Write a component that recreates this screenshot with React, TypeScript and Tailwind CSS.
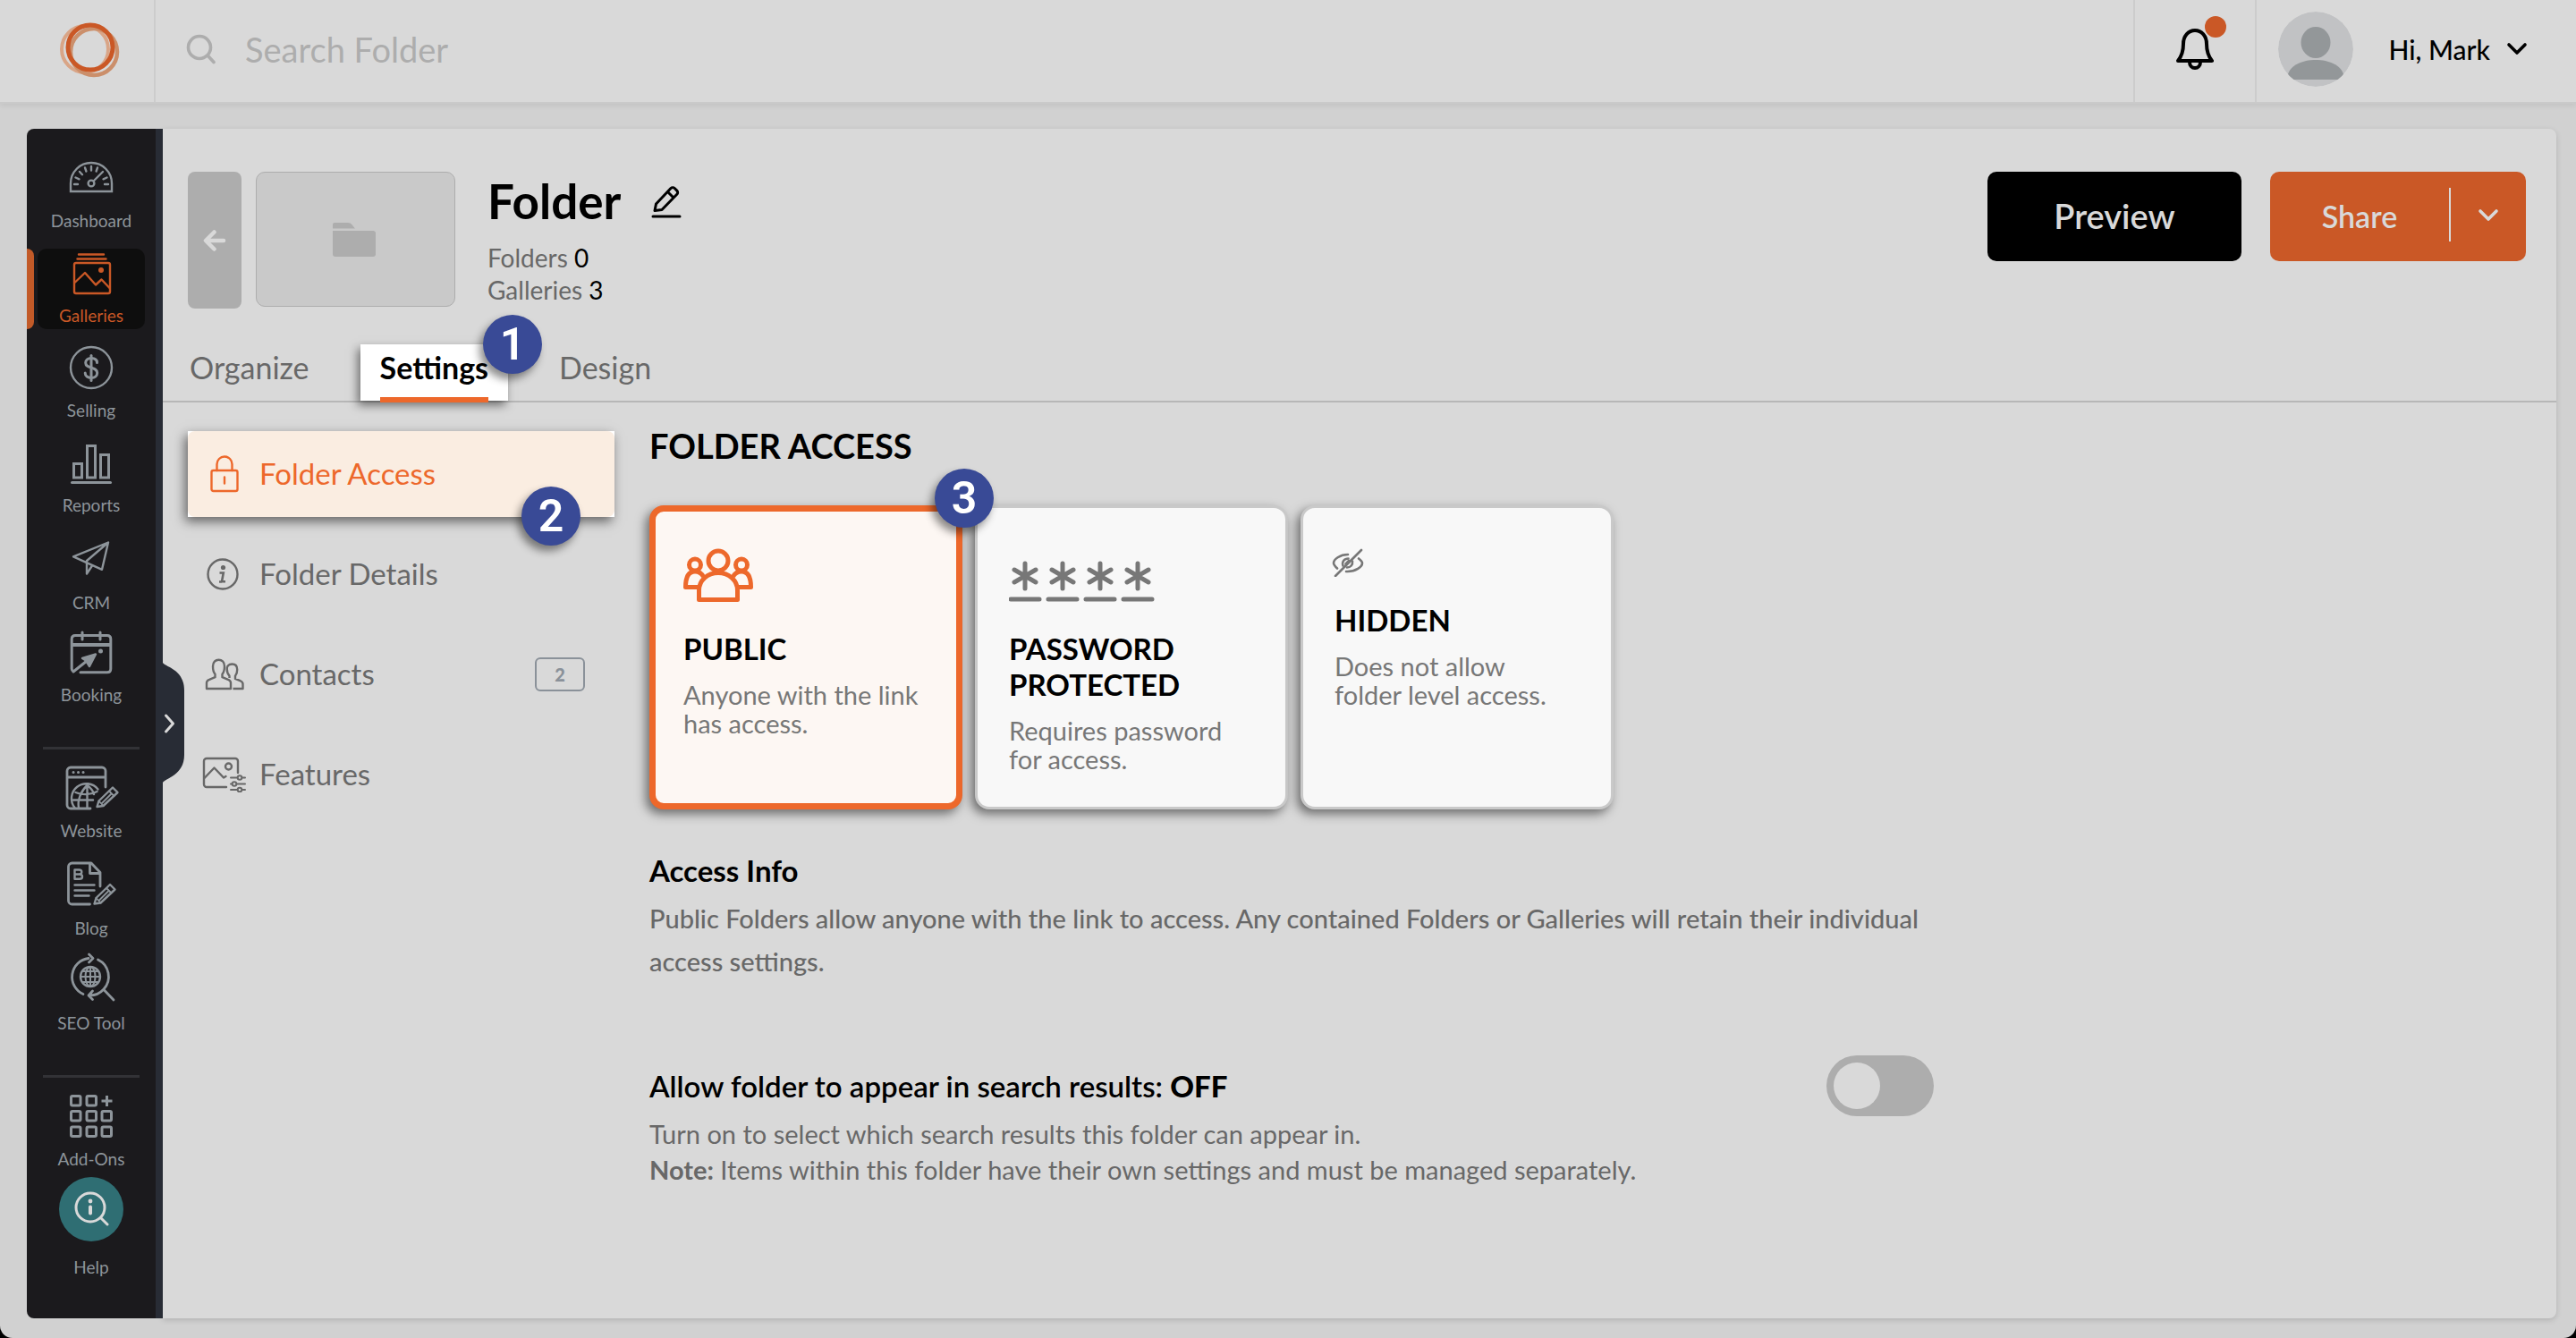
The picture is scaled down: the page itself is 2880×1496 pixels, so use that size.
import React, { useState } from 'react';

interface IconProps {
  className?: string;
}

interface SideItem {
  label: string;
  size: string;
  icon: React.ReactNode;
}

const SideSvg: React.FC<{ children: React.ReactNode }> = ({ children }) => (
  <svg
    viewBox="0 0 72 60"
    className="h-[60px] w-[72px] shrink-0 overflow-visible"
    fill="none"
    stroke="currentColor"
    strokeWidth="2.4"
    strokeLinecap="round"
    strokeLinejoin="round"
    aria-hidden="true"
  >
    {children}
  </svg>
);

const DashboardIcon = () => (
  <SideSvg>
    <path d="M13 39V30a23 23 0 0 1 46 0V39Z" strokeLinejoin="miter" />
    <circle cx="36" cy="30" r="3.4" />
    <path d="M38.5 27.5 49 17" />
    <path d="M17 31h4M51 31h4M18.500 23.500l4 1.800M53.500 23.500l-4 1.800M23 17l3 3.200M29 12.500l1.400 4M36 11v4.500M43 12.500l-1.400 4" />
  </SideSvg>
);

const GalleriesIcon = () => (
  <SideSvg>
    <path d="M22 3.500h28M20.500 8.500h32" />
    <rect x="17" y="13" width="40" height="34" rx="2" />
    <circle cx="47" cy="21" r="3" fill="currentColor" stroke="none" />
    <path d="M18 34.500 29 24l12 13.500 6.500-6L56.500 41" />
  </SideSvg>
);

const SellingIcon = () => (
  <SideSvg>
    <circle cx="36" cy="24" r="23" />
    <path d="M36 10.500v28" strokeWidth="3" />
    <path d="M42.500 18.500c0-3.300-2.800-5-6.500-5s-6.300 2-6.300 5.200c0 7 13 3.800 13 11.300 0 3.400-2.900 5.400-6.700 5.400s-6.800-1.900-6.800-5.300" strokeWidth="3" />
  </SideSvg>
);

const ReportsIcon = () => (
  <SideSvg>
    <g strokeWidth="3" strokeLinejoin="miter">
      <path d="M16.500 25.500h9v15.500h-9ZM31.500 5.500h9V41h-9ZM46.500 15.500h9V41h-9Z" />
      <path d="M14.500 46.500h43" />
    </g>
  </SideSvg>
);

const CrmIcon = () => (
  <SideSvg>
    <path d="M55 4.500 16 20.300l32 14.500L55 4.500ZM55 4.500 31 25v14.500l6-9" />
  </SideSvg>
);

const BookingIcon = () => (
  <SideSvg>
    <path d="M16 45.500c-1.200-.5-1.800-1.500-1.800-2.800V9.500c0-2.400 1.600-4 4-4h35.600c2.400 0 4 1.600 4 4v33.200c0 2.400-1.600 4-4 4H24" strokeWidth="3" />
    <path d="M26 2v8M46 2v8" strokeWidth="3" />
    <path d="M15 16h42" strokeWidth="4" />
    <path d="M16 46 31 34" strokeWidth="3" />
    <path d="M41 26.500 26 31l4 2.500 4 6.500Z" fill="currentColor" />
    <circle cx="46.500" cy="23" r="2.500" fill="currentColor" stroke="none" />
  </SideSvg>
);

const PencilShape = () => (
  <>
    <path d="M0 21.500 2 15 17.500 0 23 5.500 7 20.500Z" />
    <path d="M2 15l5 5.500M13.500 4l5.500 5.500M5.500 17.500 15.500 7.500" strokeWidth="1.800" />
  </>
);

const WebsiteIcon = () => (
  <SideSvg>
    <path d="M35 47H13a4 4 0 0 1-4-4V5a4 4 0 0 1 4-4h35a4 4 0 0 1 4 4v18M9 12h43" strokeWidth="2.800" />
    <path d="M16 6.600h.1M21.500 6.600h.1M27 6.600h.1" strokeWidth="3" />
    <path d="M17.500 46a15.500 15.500 0 0 1 26-20.500M22 46c-1.500-8 2-18 9.500-25M31.500 21v25M31.500 21c4 3 6.500 6 7.500 10M18.500 29c7 3 17 3 24-1M16 37.500h22" />
    <g transform="translate(42.500 23.500)"><PencilShape /></g>
  </SideSvg>
);

const BlogIcon = () => (
  <SideSvg>
    <path d="M34.500 45H14.500a4 4 0 0 1-4-4V3a4 4 0 0 1 4-4H36l10 10.500V25M34.500 0v10.500H45" strokeWidth="2.800" />
    <path d="M17.500 6.500h4.800c4 0 4 5 0 5h-4.800M17.500 11.500h5.200c4.400 0 4.400 5.300 0 5.300h-5.200Z M17.500 6.500v10" />
    <path d="M17.500 23.500h22M17.500 29.500h22M17.500 35.500h16" />
    <g transform="translate(39.500 23)"><PencilShape /></g>
  </SideSvg>
);

const SeoIcon = () => (
  <SideSvg>
    <path d="M27 39.500A21 21 0 0 1 33 -.5M43.500 1A21 21 0 0 1 50 34a21 21 0 0 1-15.500 7M33.500-5l4.500 4.500L33.500 4M37.500 36 33 41l4.500 4.500M50 34.500 61 46" strokeWidth="2.800" />
    <circle cx="35" cy="20" r="11" />
    <path d="M35 9v22M24 20h22M26 14h18M26 26h18" strokeWidth="2" />
    <ellipse cx="35" cy="20" rx="5.500" ry="11" strokeWidth="2" />
  </SideSvg>
);

const AddOnsIcon = () => (
  <SideSvg>
    <g strokeWidth="3">
      <rect x="13.500" y="1.500" width="10.500" height="10.500" rx="1.500" />
      <rect x="31" y="1.500" width="10.500" height="10.500" rx="1.500" />
      <path d="M53.500 1v12M47.500 7h12" strokeLinecap="butt" />
      <rect x="13.500" y="18.500" width="10.500" height="10.500" rx="1.500" />
      <rect x="31" y="18.500" width="10.500" height="10.500" rx="1.500" />
      <rect x="48" y="18.500" width="10.500" height="10.500" rx="1.500" />
      <rect x="13.500" y="36" width="10.500" height="10.500" rx="1.500" />
      <rect x="31" y="36" width="10.500" height="10.500" rx="1.500" />
      <rect x="48" y="36" width="10.500" height="10.500" rx="1.500" />
    </g>
  </SideSvg>
);

const SIDE_GROUPS: SideItem[][] = [
  [
    { label: 'Dashboard', size: 'h-[90px]', icon: <DashboardIcon /> },
    { label: 'Galleries', size: 'h-[90px]', icon: <GalleriesIcon /> },
    { label: 'Selling', size: 'h-[90px]', icon: <SellingIcon /> },
    { label: 'Reports', size: 'h-[90px]', icon: <ReportsIcon /> },
    { label: 'CRM', size: 'h-[93px]', icon: <CrmIcon /> },
    { label: 'Booking', size: 'h-[87px]', icon: <BookingIcon /> },
  ],
  [
    { label: 'Website', size: 'h-[90px]', icon: <WebsiteIcon /> },
    { label: 'Blog', size: 'h-[93px]', icon: <BlogIcon /> },
    { label: 'SEO Tool', size: 'h-[90px]', icon: <SeoIcon /> },
  ],
  [{ label: 'Add-Ons', size: 'h-[90px]', icon: <AddOnsIcon /> }],
];

const Logo = () => (
  <svg viewBox="0 0 72 64" className="h-16 w-[72px]" fill="none" aria-hidden="true">
    <circle cx="31" cy="32" r="26" stroke="#d9a587" strokeWidth="4" />
    <circle cx="41" cy="35" r="26" stroke="#cb8f6b" strokeWidth="4.500" />
    <circle cx="37" cy="30" r="25" stroke="#ca5826" strokeWidth="5" />
  </svg>
);

const SearchIcon = () => (
  <svg viewBox="0 0 34 34" className="h-[34px] w-[34px]" fill="none" stroke="#adadad" strokeWidth="3.600" strokeLinecap="round" aria-hidden="true">
    <circle cx="15" cy="15" r="12.500" />
    <path d="m25 25 6 6.500" />
  </svg>
);

const BellIcon = () => (
  <svg viewBox="0 0 42 46" className="h-[46px] w-[42px]" fill="none" stroke="black" strokeWidth="4" strokeLinejoin="round" strokeLinecap="round" aria-hidden="true">
    <path d="M8 17c0-8.500 5.500-15 13-15s13 6.500 13 15c0 9 2 14 6 19H2c4-5 6-10 6-19Z" />
    <path d="M15 37.500c0 3.600 2.600 6.500 6 6.500s6-2.900 6-6.500" />
  </svg>
);

const Avatar = () => (
  <svg viewBox="0 0 84 84" className="h-[84px] w-[84px] rounded-full" aria-hidden="true">
    <circle cx="42" cy="42" r="42" fill="#c1c2c4" />
    <ellipse cx="42" cy="34.500" rx="16.500" ry="17.500" fill="#939799" />
    <path d="M11 70c3-10 16-16 31-16s28 6 31 16l-5 6H16Z" fill="#939799" />
  </svg>
);

const ChevronDown: React.FC<IconProps> = ({ className }) => (
  <svg viewBox="0 0 24 16" className={`h-4 w-6 ${className ?? ''}`} fill="none" stroke="currentColor" strokeWidth="3.600" strokeLinecap="round" strokeLinejoin="round" aria-hidden="true">
    <path d="m3 3 9 9 9-9" />
  </svg>
);

const LockIcon = () => (
  <svg viewBox="0 0 32 42" className="h-[42px] w-8" fill="none" stroke="currentColor" strokeWidth="2.400" strokeLinecap="round" aria-hidden="true">
    <rect x="1.500" y="17" width="29" height="23" rx="2" />
    <path d="M7.500 17v-7a8.500 8.500 0 0 1 17 0v7M16 24.500v7" />
  </svg>
);

const InfoIcon = () => (
  <svg viewBox="0 0 36 36" className="mr-1 h-9 w-9" fill="none" stroke="currentColor" strokeWidth="2.400" aria-hidden="true">
    <circle cx="18" cy="18" r="16.500" />
    <circle cx="18.500" cy="10.500" r="2.600" fill="currentColor" stroke="none" />
    <path d="M14.500 16.500h4.300L17 26.200h4M14 26.500h3" strokeWidth="2.600" />
  </svg>
);

const ContactsIcon = () => (
  <svg viewBox="0 0 44 36" className="h-9 w-11" fill="none" stroke="currentColor" strokeWidth="2.400" strokeLinejoin="round" aria-hidden="true">
    <path d="M2 34v-6.500c0-2 1-3 3-3.700l6.500-2.600v-3.500C9.500 15.500 9 12.500 9 9c0-4.500 2.800-7.300 6.500-7.300S22 4.500 22 9c0 3.500-.6 6.500-2.500 8.700v3.500l6.500 2.600c2 .7 3 1.700 3 3.700V34Z" />
    <path d="M25 9.500c1.200-2 3-3 5.500-3 3.600 0 5.700 2.500 5.700 6.200 0 3-.7 5.300-2.200 7v3.200l5.500 2.300c2 .8 3 1.700 3 3.600V34H31.500M25 9.500c-.6 4 .3 8 2.500 10.200V22" />
  </svg>
);

const FeaturesIcon = () => (
  <svg viewBox="0 0 50 40" className="h-10 w-[50px]" fill="none" stroke="currentColor" strokeWidth="2.400" strokeLinecap="round" strokeLinejoin="round" aria-hidden="true">
    <path d="M27 34H5a3 3 0 0 1-3-3V5a3 3 0 0 1 3-3h32a3 3 0 0 1 3 3v13" />
    <circle cx="29.500" cy="11" r="3.500" />
    <path d="M2.500 24 13.500 12.500 24 23.500l2.500-1.500" />
    <path d="M32 23.500h7M45 23.500h3M32 30.500h1M39 30.500h9M32 37h7M45 37h3" strokeWidth="2" />
    <circle cx="42" cy="23.500" r="2.300" strokeWidth="2" />
    <circle cx="36" cy="30.500" r="2.300" strokeWidth="2" />
    <circle cx="42" cy="37" r="2.300" strokeWidth="2" />
  </svg>
);

const PublicIcon = () => (
  <svg viewBox="0 0 78 62" className="h-[62px] w-[78px]" fill="none" stroke="#ed682b" strokeWidth="5" strokeLinejoin="round" aria-hidden="true">
    <circle cx="39" cy="14" r="11" />
    <path d="M17.500 57.500V47C17.500 36 27 27.500 39 27.500S60.500 36 60.500 47v10.500Z" />
    <circle cx="13" cy="18.500" r="6.500" />
    <circle cx="65" cy="18.500" r="6.500" />
    <path d="M17 43.500H2.500C2.500 32 6 26 13 26c4.500 0 7.500 2 9.500 6M61 43.500h14.500C75.500 32 72 26 65 26c-4.500 0-7.500 2-9.500 6" />
  </svg>
);

const PasswordIcon = () => (
  <svg viewBox="0 0 164 62" className="h-[62px] w-[164px]" fill="none" stroke="#777777" strokeWidth="5" strokeLinecap="round" aria-hidden="true">
    {[18, 60, 102, 144].map(x => (
      <path key={x} d={`M${x} 17v28M${x - 12} 24l24 14M${x + 12} 24l-24 14M${x - 16} 57h32`} />
    ))}
  </svg>
);

const HiddenIcon = () => (
  <svg viewBox="0 0 36 32" className="-ml-[3px] h-8 w-9" fill="none" stroke="#777777" strokeWidth="2.600" strokeLinecap="round" aria-hidden="true">
    <path d="M33 2 4 31M6 22.500c-2-1.900-4-4.300-4-6C2 12.500 9 7 18 7M30 11.500c2.500 2 4 3.700 4 5C34 20.500 27 26.500 16 26" />
    <path d="M12.500 19.500c-1.500-4.500 1.500-8 6-8M23 14.500c.6 4-2 7-6 7M15.500 17.500l3.500-3.500" />
  </svg>
);

const StepBadge: React.FC<{ step: number; className: string }> = ({ step, className }) => (
  <span
    className={`absolute z-10 flex h-[66px] w-[66px] items-center justify-center rounded-full bg-[#394a96] font-['Roboto'] text-[50px] leading-none font-semibold text-white shadow-[-4px_6px_10px_rgba(0,0,0,0.45)] ${className}`}
  >
    {step}
  </span>
);

const ACCESS_OPTIONS = [
  { id: 'public', title: 'PUBLIC', text: 'Anyone with the link\nhas access.', icon: <PublicIcon />, iconBox: 'h-[90px]' },
  { id: 'password', title: 'PASSWORD PROTECTED', text: 'Requires password\nfor access.', icon: <PasswordIcon />, iconBox: 'h-[90px]' },
  { id: 'hidden', title: 'HIDDEN', text: 'Does not allow\nfolder level access.', icon: <HiddenIcon />, iconBox: 'h-[58px]' },
];

const NAV_ITEMS = [
  { label: 'Folder Access', icon: <LockIcon /> },
  { label: 'Folder Details', icon: <InfoIcon /> },
  { label: 'Contacts', icon: <ContactsIcon />, count: 2 },
  { label: 'Features', icon: <FeaturesIcon /> },
];

const TopBar = () => (
  <header className="relative z-10 flex h-[116px] items-stretch border-b-2 border-[#cacaca] bg-[#d9d9d9] shadow-[0_2px_6px_rgba(0,0,0,0.08)]">
    <a href="#" aria-label="Home" className="flex w-[174px] items-center justify-end border-r-2 border-[#cccccc] pr-9 pb-1">
      <Logo />
    </a>
    <label className="flex flex-1 items-center gap-8 pb-1 pl-[34px]">
      <SearchIcon />
      <input
        type="search"
        aria-label="Search Folder"
        placeholder="Search Folder"
        className="flex-1 bg-transparent text-[38px] leading-[48px] outline-none placeholder:text-[#adadad]"
      />
    </label>
    <button aria-label="Notifications" className="flex w-[138px] items-center justify-center border-x-2 border-[#cccccc] pb-1">
      <span className="relative">
        <BellIcon />
        <span className="absolute -top-[14px] -right-[14px] h-6 w-6 rounded-full bg-[#ca5826]" />
      </span>
    </button>
    <button className="flex items-center pr-[54px] pb-1 pl-6">
      <Avatar />
      <span className="ml-10 text-[30px] leading-9 font-medium">Hi, Mark</span>
      <ChevronDown className="ml-[18px]" />
    </button>
  </header>
);

const Sidebar = () => (
  <nav className="relative flex w-[152px] shrink-0 flex-col rounded-l-lg border-r-8 border-[#282c35] bg-[#1b1a1d] pt-7 text-[19px] leading-6 text-[#8d949a]">
    {SIDE_GROUPS.map((group, i) => (
      <div key={i} className="flex flex-col">
        {i > 0 && <hr className="mx-[18px] mt-[43px] border-t-[3px] border-[#323236]" />}
        <div className={i > 0 ? 'flex flex-col gap-4 pt-4' : 'flex flex-col gap-4'}>
          {group.map(item => {
            const active = item.label === 'Galleries';
            return (
              <a key={item.label} href="#" className={`relative flex justify-center ${item.size}`}>
                {active && <span className="absolute left-0 h-full w-2 rounded-r-lg bg-[#c25a28]" />}
                <span
                  className={
                    active
                      ? 'flex w-[120px] flex-col items-center justify-end rounded-[10px] bg-[#0e0e0e] pb-[3px] text-[#ca5826]'
                      : 'flex w-[120px] flex-col items-center justify-end pb-[3px]'
                  }
                >
                  {item.icon}
                  {item.label}
                </span>
              </a>
            );
          })}
        </div>
      </div>
    ))}
    <a href="#" className="mt-[5px] flex flex-col items-center gap-[17px]">
      <span className="flex h-[72px] w-[72px] items-center justify-center rounded-full bg-[#2f6e73]">
        <svg viewBox="0 0 40 40" className="h-10 w-10" fill="none" stroke="#d9d9d9" strokeWidth="3" strokeLinecap="round" aria-hidden="true">
          <circle cx="19" cy="18" r="16" />
          <path d="m31 30 7 7" />
          <path d="M19 17.500v7" strokeWidth="4" />
          <circle cx="19" cy="11" r="2.400" fill="#d9d9d9" stroke="none" />
        </svg>
      </span>
      Help
    </a>
    <button aria-label="Expand menu" className="absolute top-[596px] -right-8 z-10 h-[136px] w-6">
      <svg viewBox="0 0 24 136" className="h-full w-full overflow-visible" fill="none" aria-hidden="true">
        <path d="M0 1c3 5 24 7 24 31v72c0 23-21 26-24 31Z" fill="#282c35" />
        <path d="m3.500 60 8 9-8 9" stroke="#d9d9d9" strokeWidth="3" strokeLinecap="round" strokeLinejoin="round" />
      </svg>
    </button>
  </nav>
);

const FolderHeader = () => (
  <div className="flex items-start pr-[34px] pl-7">
    <button aria-label="Back" className="flex h-[153px] w-[60px] items-center justify-center rounded-lg bg-[#adadad]">
      <svg viewBox="0 0 26 26" className="h-[26px] w-[26px]" fill="none" stroke="#d9d9d9" strokeWidth="4.500" strokeLinecap="round" strokeLinejoin="round" aria-hidden="true">
        <path d="M23 13H4M12.500 3.500 3 13l9.500 9.500" />
      </svg>
    </button>
    <div className="ml-4 flex h-[151px] w-[223px] items-center justify-center rounded-[10px] border border-[#adadad] bg-[#c9c9c9] pr-1">
      <svg viewBox="0 0 48 38" className="h-[38px] w-12" fill="#adadad" aria-hidden="true">
        <path d="M0 6V2a2 2 0 0 1 2-2h15c4 0 5 3 8 6.500H0Z" />
        <path d="M0 9h45a3 3 0 0 1 3 3v23a3 3 0 0 1-3 3H3a3 3 0 0 1-3-3Z" />
      </svg>
    </div>
    <div className="ml-9">
      <div className="flex items-center gap-[34px]">
        <h1 className="text-[53px] leading-[66px] font-bold">Folder</h1>
        <button aria-label="Rename folder">
          <svg viewBox="0 0 34 38" className="h-[38px] w-[34px]" fill="none" stroke="black" strokeWidth="3" strokeLinejoin="round" strokeLinecap="round" aria-hidden="true">
            <path d="M4 29.500 5.500 22 22 4.500a3 3 0 0 1 4.200 0l2.600 2.600a3 3 0 0 1 0 4.200L12 28.500ZM18.500 8.500l6.500 6.500M2 36h30" />
          </svg>
        </button>
      </div>
      <p className="mt-3 text-[28px] leading-9 text-[#686868]">Folders <span className="text-black">0</span></p>
      <p className="text-[28px] leading-9 text-[#686868]">Galleries <span className="text-black">3</span></p>
    </div>
    <div className="ml-auto flex gap-8">
      <button className="h-[100px] w-[284px] rounded-[10px] bg-black pb-[2px] text-[38px] font-semibold text-[#d9d9d9]">Preview</button>
      <div className="flex h-[100px] w-[286px] items-center rounded-[10px] bg-[#ca5826] text-[#d9d9d9]">
        <button className="h-full flex-1 pb-[2px] text-[34px] font-semibold">Share</button>
        <span className="mb-1 h-[60px] w-[2px] bg-[#d9d9d9]" />
        <button aria-label="More share options" className="flex h-full w-[84px] items-center justify-center pb-[2px]">
          <ChevronDown />
        </button>
      </div>
    </div>
  </div>
);

const Tabs = () => (
  <div role="tablist" className="mt-10 flex h-[65px] gap-[35px] border-b-2 border-[#b7b7b7] pl-2 text-[34px] leading-[52px] text-[#686868]">
    <button role="tab" aria-selected="false" className="px-[22px] pb-[11px]">Organize</button>
    <button role="tab" aria-selected="true" className="relative bg-white px-[22px] pb-[11px] font-bold text-black shadow-[-3px_5px_10px_rgba(0,0,0,0.5)]">
      Settings
      <span className="absolute inset-x-[22px] -bottom-[2px] h-[6px] bg-[#ed682b]" />
      <StepBadge step={1} className="-top-[33px] -right-[38px]" />
    </button>
    <button role="tab" aria-selected="false" className="px-[22px] pb-[11px]">Design</button>
  </div>
);

const SettingsNav = () => (
  <nav className="mt-8 flex w-[477px] shrink-0 flex-col gap-4 text-[33px] leading-10 text-[#686868]">
    {NAV_ITEMS.map((item, i) => (
      <a
        key={item.label}
        href="#"
        className={
          i === 0
            ? 'relative h-24 bg-white text-[#ed682b] shadow-[-3px_5px_12px_rgba(0,0,0,0.55)]'
            : 'relative h-24'
        }
      >
        <span className={i === 0 ? 'flex h-full items-center rounded-lg bg-[#faede1]' : 'flex h-full items-center'}>
          <span className="ml-4 flex w-[50px] justify-center">{item.icon}</span>
          <span className="ml-[14px] pb-[2px]">{item.label}</span>
          {item.count && (
            <span className="mr-[33px] ml-auto flex h-[38px] w-14 items-center justify-center rounded-md border-2 border-[#8a9199] text-[20px] font-black text-[#8a9199]">
              {item.count}
            </span>
          )}
        </span>
        {i === 0 && <StepBadge step={2} className="right-[38px] -bottom-8" />}
      </a>
    ))}
  </nav>
);

const AccessSettings = () => {
  const [access, setAccess] = useState('public');
  const [searchable, setSearchable] = useState(false);

  return (
    <section className="mt-6 max-w-[1436px] flex-1 text-[29px] text-[#686868]">
      <h2 className="text-[38px] leading-[48px] font-bold text-black">FOLDER ACCESS</h2>
      <div className="relative mt-[43px] flex gap-[14px]">
        {ACCESS_OPTIONS.map(option => (
          <label
            key={option.id}
            className={
              access === option.id
                ? 'relative flex h-[340px] w-[350px] flex-col rounded-2xl border-[7px] border-[#ed682b] bg-[#fdf7f3] px-[31px] pt-[33px] shadow-[-4px_5px_12px_rgba(0,0,0,0.5)]'
                : 'relative flex h-[340px] w-[350px] flex-col rounded-2xl border-[3px] border-[#c9c9c9] bg-[#f8f8f8] px-[35px] pt-[37px] shadow-[-4px_5px_12px_rgba(0,0,0,0.5)]'
            }
          >
            <input
              type="radio"
              name="access"
              className="sr-only"
              checked={access === option.id}
              onChange={() => setAccess(option.id)}
            />
            <span className={`mt-2 ${option.iconBox}`}>{option.icon}</span>
            <span className="mt-[2px] text-[33px] leading-10 font-bold text-black">{option.title}</span>
            <span className="mt-4 leading-8 whitespace-pre text-[#777777]">{option.text}</span>
            {option.id === 'public' && <StepBadge step={3} className="-top-12 -right-[42px]" />}
          </label>
        ))}
      </div>
      <h3 className="mt-12 text-[33px] leading-10 font-bold text-black">Access Info</h3>
      <p className="mt-[10px] leading-[48px] font-medium">
        Public Folders allow anyone with the link to access. Any contained Folders or Galleries will retain their individual access settings.
      </p>
      <div className="mt-[81px] flex h-[68px] items-center justify-between">
        <label htmlFor="searchable" className="text-[33px] leading-10 font-semibold text-black">
          Allow folder to appear in search results: <b>{searchable ? 'ON' : 'OFF'}</b>
        </label>
        <input
          id="searchable"
          type="checkbox"
          role="switch"
          checked={searchable}
          onChange={e => setSearchable(e.target.checked)}
          className="h-[68px] w-[120px] appearance-none rounded-full bg-[#adadad] p-2 before:block before:h-[52px] before:w-[52px] before:rounded-full before:bg-[#d9d9d9] checked:before:ml-[52px]"
        />
      </div>
      <p className="leading-10">Turn on to select which search results this folder can appear in.</p>
      <p className="leading-10"><b>Note:</b> Items within this folder have their own settings and must be managed separately.</p>
    </section>
  );
};

const App: React.FC = () => {
  return (
    <div className="min-h-screen bg-black">
      <div className="flex min-h-screen flex-col overflow-hidden rounded-b-[14px] bg-[#d1d1d1] font-['Lato',sans-serif] text-black">
        <TopBar />
        <div className="flex flex-1 items-stretch pt-7 pr-[22px] pb-[22px] pl-[30px]">
          <Sidebar />
          <main className="flex-1 rounded-r-lg bg-[#d9d9d9] pt-12 shadow-[0_2px_6px_rgba(0,0,0,0.15)]">
            <FolderHeader />
            <Tabs />
            <div className="flex gap-[39px] pl-7">
              <SettingsNav />
              <AccessSettings />
            </div>
          </main>
        </div>
      </div>
    </div>
  );
};

export default App;
